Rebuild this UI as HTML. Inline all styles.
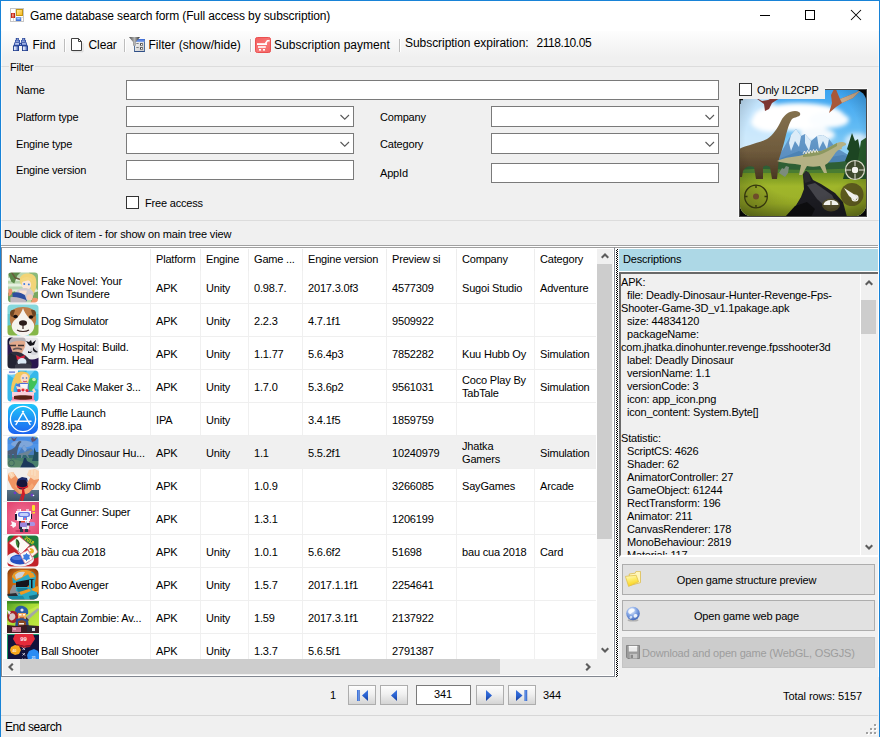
<!DOCTYPE html><html><head><meta charset="utf-8"><title>Game database search form</title><style>
*{box-sizing:border-box;margin:0;padding:0}
html,body{width:881px;height:737px;overflow:hidden;background:#fff}
body{position:relative;font-family:"Liberation Sans", "DejaVu Sans", sans-serif;font-size:11px;color:#000;letter-spacing:-0.18px}
#win{position:absolute;left:0;top:0;width:880px;height:760px;background:#f0f0f0;border:1px solid #1883d7;border-bottom:none}
.a{position:absolute;white-space:pre}
.t{position:absolute;white-space:pre;line-height:13px;height:13px}
.ui{font-size:12px;letter-spacing:-0.1px;line-height:14px;height:14px}
#title{position:absolute;left:0;top:0;width:878px;height:30px;background:#fff}
#tool{position:absolute;left:0;top:30px;width:878px;height:27px;background:linear-gradient(#fdfdfd,#f0f0f0)}
.sep{position:absolute;width:1px;height:13px;background:#bdbdbd;box-shadow:1px 0 0 #fff}
.inp{position:absolute;background:#fff;border:1px solid #7a7a7a;height:20px}
.cmb{position:absolute;background:#fff;border:1px solid #7a7a7a;height:21px}
.cmb svg{position:absolute;right:3px;top:6.500px}
.chk{position:absolute;width:13px;height:13px;background:#fff;border:1px solid #333}
.btn{position:absolute;left:621px;width:253px;height:31px;background:#e1e1e1;border:1px solid #adadad}
.btn .t{left:0;width:100%;text-align:center;top:9px}
.nb{position:absolute;width:28px;height:20px;border:1px solid #adadad;background:linear-gradient(#fdfdfd,#f0f0f0 45%,#d4d4d4)}
.row{position:absolute;left:0;width:593px;height:33px;border-bottom:1px solid #efefef;background:#fff}
.row.sel{background:linear-gradient(90deg,#fff 36px,#f0f0f0 36px)}
.vl{position:absolute;top:0;width:1px;height:100%;background:#f0f0f0}
.ic{position:absolute;left:4px;top:0;width:32px;height:32px;overflow:hidden}
.c{position:absolute;white-space:pre;line-height:13px}
</style></head><body><div id="win">
<div id="title"></div>
<svg class="a" style="left:9px;top:7px" width="14" height="14" viewBox="0 0 14 14">
<defs><linearGradient id="ay" x1="0" y1="0" x2="1" y2="1"><stop offset="0" stop-color="#fff0a0"/><stop offset="1" stop-color="#f8b414"/></linearGradient>
<linearGradient id="ar" x1="0" y1="0" x2="1" y2="0"><stop offset="0" stop-color="#b01c10"/><stop offset="0.500" stop-color="#ec5a48"/><stop offset="1" stop-color="#a81408"/></linearGradient>
<linearGradient id="ab" x1="0" y1="0" x2="0" y2="1"><stop offset="0" stop-color="#7aa8f0"/><stop offset="1" stop-color="#3a6cd4"/></linearGradient></defs>
<rect x="0.500" y="0.500" width="13" height="13" fill="#fff" stroke="#c6c6c6"/>
<path d="M5.500 1v12M1 9.500h12M11.500 9v4M3.500 10v3" stroke="#dcdcdc" stroke-width="1"/>
<rect x="6.500" y="1.500" width="6" height="6" fill="url(#ay)" stroke="#c4950e"/>
<rect x="1" y="5" width="4" height="5" fill="url(#ar)"/><rect x="2.200" y="6.200" width="1.300" height="2.300" fill="#f8a898"/>
<rect x="6" y="9" width="5" height="4" fill="url(#ab)"/><rect x="7.200" y="10" width="2.600" height="1.300" fill="#a8c8f8"/>
</svg>
<div class="t ui" style="left:29px;top:8px;letter-spacing:-0.12px">Game database search form (Full access by subscription)</div>
<svg class="a" style="left:750px;top:0px" width="128" height="30" viewBox="0 0 128 30">
<path d="M9 14.500h10" stroke="#000" stroke-width="1" fill="none"/>
<rect x="54.500" y="9.500" width="9" height="9" stroke="#000" stroke-width="1" fill="none"/>
<path d="M100 9l10 10m0-10l-10 10" stroke="#000" stroke-width="1.050" fill="none"/>
</svg>
<div id="tool"></div>
<svg class="a" style="left:12px;top:37px" width="15" height="13" viewBox="0 0 15 13">
<defs><linearGradient id="bn" x1="0" y1="0" x2="1" y2="0"><stop offset="0" stop-color="#e8eefc"/><stop offset="0.450" stop-color="#c4d0f0"/><stop offset="1" stop-color="#3a58b0"/></linearGradient></defs>
<rect x="2.800" y="0" width="3" height="2" fill="#27459a"/><rect x="3.800" y="0.700" width="1" height="1" fill="#dfe6fa"/>
<rect x="9.200" y="0" width="3" height="2" fill="#27459a"/><rect x="10.200" y="0.700" width="1" height="1" fill="#dfe6fa"/>
<rect x="2" y="2" width="5" height="2.300" fill="#3553ab"/><rect x="2.800" y="2.700" width="3" height="0.900" fill="#c9d4f2"/>
<rect x="8" y="2" width="5" height="2.300" fill="#3553ab"/><rect x="8.800" y="2.700" width="3" height="0.900" fill="#c9d4f2"/>
<path d="M1.500 4.300h5.500l0.500 1.200h0l0.500-1.200h5.500l1 3.700h-14z" fill="#2a4aa2"/>
<path d="M2.300 5h3.700v1.800h-4.200z" fill="#b8c6ee"/><path d="M9 5h3.700l0.500 1.800h-4.200z" fill="#9fb2e6"/>
<rect x="6.300" y="5.300" width="2.400" height="2.200" fill="#1f3c8c"/><rect x="7" y="6" width="1" height="1" fill="#8fa4dc"/>
<rect x="0" y="7.600" width="6" height="5.400" fill="#1f3c8c"/><rect x="0.900" y="8.400" width="4.300" height="3.800" fill="url(#bn)"/>
<rect x="9" y="7.600" width="6" height="5.400" fill="#1f3c8c"/><rect x="9.900" y="8.400" width="4.300" height="3.800" fill="url(#bn)"/>
</svg>
<div class="t ui" style="left:31.5px;top:37px;">Find</div>
<div class="sep" style="left:63px;top:38px"></div>
<svg class="a" style="left:70px;top:37px" width="13" height="15" viewBox="0 0 13 15">
<path d="M1.500 13.800h10.500v-8.500" fill="none" stroke="#d8d8d8" stroke-width="1"/>
<path d="M0.500 0.500H7.500L10.500 3.500V12.500H0.500Z" fill="#fff" stroke="#404040" stroke-width="1"/>
<path d="M7.500 0.500V3.500H10.500" fill="none" stroke="#404040" stroke-width="1"/>
</svg>
<div class="t ui" style="left:87.5px;top:37px;">Clear</div>
<div class="sep" style="left:123px;top:38px"></div>
<svg class="a" style="left:128px;top:36px" width="16" height="15" viewBox="0 0 16 15">
<defs><linearGradient id="fh" x1="0" y1="0" x2="0" y2="1"><stop offset="0" stop-color="#3766d6"/><stop offset="1" stop-color="#86a8ec"/></linearGradient>
<linearGradient id="fb" x1="0" y1="0" x2="1" y2="1"><stop offset="0" stop-color="#fafafa"/><stop offset="1" stop-color="#c8c8c8"/></linearGradient>
<linearGradient id="fu" x1="0" y1="0" x2="1" y2="0"><stop offset="0" stop-color="#4a4a4a"/><stop offset="0.500" stop-color="#b4b4b4"/><stop offset="1" stop-color="#2c2c2c"/></linearGradient></defs>
<rect x="5.500" y="2.500" width="10" height="12" fill="url(#fb)" stroke="#52709c" stroke-width="1"/>
<rect x="6" y="2" width="9.500" height="3" fill="url(#fh)"/>
<path d="M5.500 14.500h10" stroke="#2f4f86" stroke-width="1"/>
<rect x="7.300" y="6.200" width="2.400" height="0.800" fill="#666"/><rect x="7.300" y="10.200" width="2.400" height="0.800" fill="#666"/>
<rect x="11" y="6.200" width="2.800" height="2.400" fill="#444"/><rect x="12" y="7" width="1.200" height="1.100" fill="#fff"/>
<rect x="11" y="10.200" width="2.800" height="2.400" fill="#444"/><rect x="12" y="11" width="1.200" height="1.100" fill="#fff"/>
<path d="M0 0H11L6.800 5V8.800H4V5Z" fill="url(#fu)"/>
</svg>
<div class="t ui" style="left:147.5px;top:37px;letter-spacing:0.02px">Filter (show/hide)</div>
<div class="sep" style="left:249px;top:38px"></div>
<svg class="a" style="left:254px;top:36px" width="16" height="16" viewBox="0 0 16 16">
<defs><linearGradient id="ct" x1="0" y1="0" x2="1" y2="1"><stop offset="0" stop-color="#f25e5e"/><stop offset="0.600" stop-color="#f87878"/><stop offset="1" stop-color="#f06060"/></linearGradient></defs>
<rect x="0.500" y="0.500" width="15" height="15" rx="1.800" fill="url(#ct)" stroke="#ea5050" stroke-width="1"/>
<rect x="2" y="6.200" width="10" height="1.800" fill="#fff"/>
<rect x="3" y="9.200" width="7.800" height="1.600" fill="#fff"/>
<rect x="4" y="12" width="2" height="1.600" fill="#fff"/><rect x="8" y="12" width="2" height="1.600" fill="#fff"/>
<path d="M10.300 6.800L12.400 3.800H14.600" fill="none" stroke="#fff" stroke-width="1.500"/>
</svg>
<div class="t ui" style="left:273px;top:37px;letter-spacing:0.02px">Subscription payment</div>
<div class="sep" style="left:398px;top:38px"></div>
<div class="t ui" style="left:404px;top:35px;letter-spacing:-0.05px">Subscription expiration:</div>
<div class="t ui" style="left:535.5px;top:35px;letter-spacing:-0.45px">2118.10.05</div>
<div class="a" style="left:0;top:30px;width:1px;height:214px;background:#f9f9f9"></div><div class="a" style="left:877px;top:30px;width:1px;height:214px;background:#f9f9f9"></div>
<div class="a" style="left:0px;top:65px;width:878px;height:155px;border:1px solid #dcdcdc;border-left-color:#f9f9f9;border-right-color:#f9f9f9"></div>
<div class="t" style="left:8px;top:60px;background:#f0f0f0;padding:0 2px 0 1px">Filter</div>
<div class="t " style="left:15px;top:83px;">Name</div>
<div class="inp" style="left:125px;top:79px;width:593px"></div>
<div class="t " style="left:15px;top:110px;">Platform type</div>
<div class="cmb" style="left:125px;top:105px;width:228px"><svg width="11" height="7" viewBox="0 0 11 7"><path d="M1.500 1l4.250 4.250l4.250-4.250" fill="none" stroke="#585858" stroke-width="1.100"/></svg></div>
<div class="t " style="left:15px;top:137px;">Engine type</div>
<div class="cmb" style="left:125px;top:132px;width:228px"><svg width="11" height="7" viewBox="0 0 11 7"><path d="M1.500 1l4.250 4.250l4.250-4.250" fill="none" stroke="#585858" stroke-width="1.100"/></svg></div>
<div class="t " style="left:15px;top:163px;">Engine version</div>
<div class="inp" style="left:125px;top:159px;width:228px"></div>
<div class="t " style="left:379px;top:110px;">Company</div>
<div class="cmb" style="left:490px;top:105px;width:228px"><svg width="11" height="7" viewBox="0 0 11 7"><path d="M1.500 1l4.250 4.250l4.250-4.250" fill="none" stroke="#585858" stroke-width="1.100"/></svg></div>
<div class="t " style="left:379px;top:137px;">Category</div>
<div class="cmb" style="left:490px;top:132px;width:228px"><svg width="11" height="7" viewBox="0 0 11 7"><path d="M1.500 1l4.250 4.250l4.250-4.250" fill="none" stroke="#585858" stroke-width="1.100"/></svg></div>
<div class="t " style="left:379px;top:166px;">AppId</div>
<div class="inp" style="left:490px;top:162px;width:228px"></div>
<div class="chk" style="left:125px;top:195px"></div>
<div class="t " style="left:144px;top:196px;">Free access</div>
<svg class="a" style="left:738px;top:88px" width="128" height="128" viewBox="0 0 128 128">
<defs>
<linearGradient id="sky" x1="0" y1="0" x2="0" y2="1"><stop offset="0" stop-color="#3aa2f0"/><stop offset="0.300" stop-color="#62bbf4"/><stop offset="0.650" stop-color="#b4e2f8"/><stop offset="1" stop-color="#d8f0fa"/></linearGradient>
<linearGradient id="grs" x1="0" y1="0" x2="0" y2="1"><stop offset="0" stop-color="#6f9022"/><stop offset="0.300" stop-color="#a0b62a"/><stop offset="0.700" stop-color="#9cb028"/><stop offset="1" stop-color="#7c8e1e"/></linearGradient>
<radialGradient id="vig" cx="0.500" cy="0.400" r="0.750"><stop offset="0.600" stop-color="#000" stop-opacity="0"/><stop offset="1" stop-color="#000" stop-opacity="0.350"/></radialGradient>
<linearGradient id="mtn" x1="0" y1="0" x2="0" y2="1"><stop offset="0" stop-color="#6a9ccc"/><stop offset="1" stop-color="#4f86b8"/></linearGradient>
<linearGradient id="bra" x1="0" y1="0" x2="0" y2="1"><stop offset="0" stop-color="#84714e"/><stop offset="0.600" stop-color="#6e5a3c"/><stop offset="1" stop-color="#483622"/></linearGradient>
<clipPath id="rc"><rect x="0.500" y="0.500" width="127" height="127" rx="13"/></clipPath>
<filter id="b1" x="-10%" y="-10%" width="120%" height="120%"><feGaussianBlur stdDeviation="0.700"/></filter>
<filter id="b2" x="-20%" y="-20%" width="140%" height="140%"><feGaussianBlur stdDeviation="2.200"/></filter>
</defs>
<rect width="128" height="128" fill="#060606"/>
<g clip-path="url(#rc)">
<rect width="128" height="128" fill="url(#sky)"/>
<g filter="url(#b2)">
<ellipse cx="6" cy="30" rx="34" ry="34" fill="#eaf6ff" fill-opacity="0.750"/>
<ellipse cx="60" cy="28" rx="46" ry="14" fill="#fff"/>
<ellipse cx="34" cy="33" rx="22" ry="10" fill="#fff"/>
<ellipse cx="90" cy="31" rx="20" ry="8" fill="#fafdff"/>
<ellipse cx="78" cy="46" rx="18" ry="7" fill="#f4f9fd"/>
<ellipse cx="118" cy="52" rx="12" ry="8" fill="#e6f3fb" fill-opacity="0.800"/>
</g>
<g filter="url(#b1)">
<path d="M34 76 L44 60 L52 46 L57 40 L62 47 L66 45 L72 52 L78 47 L84 46 L90 50 L96 58 L106 64 L116 70 L128 74 V88 H34z" fill="url(#mtn)"/>
<path d="M52 46 L57 40 L62 47 L60 58 L56 52 L52 62 L50 54z M78 47 L84 46 L90 50 L88 60 L84 52 L80 60z M66 45 L72 52 L70 62 L66 54z" fill="#dcecf8"/>
<path d="M40 70 L60 62 L80 70 L104 66 L128 72 V86 H40z" fill="#4a80b0" fill-opacity="0.800"/>
<path d="M0 73 C14 69 30 71 44 73 C60 70 84 75 100 73 L128 69 V90 H0z" fill="#2f5e34"/>
<path d="M0 81 C20 79 40 81 70 81 L128 79 V90 H0z" fill="#4a7c30"/>
<rect x="0" y="84" width="128" height="44" fill="url(#grs)"/>
<path d="M113 44 L116 52 L119 50 L121 60 L124 58 L128 72 V90 H104 L108 74 L106 72 L110 62 L108 60z" fill="#1c4420"/>
<path d="M122 52 L128 48 V90 H116z" fill="#28582a"/>
<path d="M0 88 L0 60 C8 56 20 54 28 50 C34 46 38 40 42 32 C45 26 50 22 56 22 C60 22 62 24 61 26 C60 28 56 28 53 30 C50 34 48 42 46 50 C44 58 42 64 40 70 C39 76 39 82 38 90 L33 90 L31 78 C28 76 26 76 24 78 L24 90 L17 90 L15 78 C10 76 6 78 4 82 L3 88z" fill="url(#bra)"/>
<path d="M38 72 C46 68 56 68 64 66 C70 62 76 62 82 62 C88 60 94 56 98 54 C102 52 108 53 107 56 C104 57 102 58 103 60 C100 60 97 62 95 66 C92 70 90 74 86 76 L88 84 L85 84 L81 77 C76 78 72 78 68 77 L63 86 L60 86 L62 76 C54 74 46 75 38 72z" fill="#b4b184"/>
<path d="M64 66 C70 62 76 62 82 62 C88 60 94 56 98 54 L98 57 C92 60 86 64 80 66 C74 67 68 68 64 68z" fill="#8c9860"/>
<path d="M64 65 l1.500-3 1.500 3 1.500-3.500 1.500 3 1.500-3.500 1.500 3 1.500-3.500 1.500 3 1.500-3 1.500 3" fill="none" stroke="#f0ece0" stroke-width="0.900"/>
<path d="M40 84 l3-5 2 1 2-3 3 1 -1 6 -3 4z" fill="#7c8c7c"/>
<path d="M14 7 L23 12 L29 11 L41 5 L44 7 L33 14 L30 20 L26 22 L25 15z" fill="#7c3430"/>
<path d="M92 6 L96 -2 L101 10 L116 4 L122 1 L114 9 L103 14 L97 18 L90 24 L93 14z" fill="#a85838"/>
<path d="M101 10 L116 4 L122 1 L114 9 L103 14z" fill="#c8a888"/>
</g>
<path d="M48 128 L56 118 L62 108 L65 100 L64 85 L67 82 L70 84 L74 91 L82 95 L96 104 L104 113 L108 128z" fill="#1c1c20" filter="url(#b1)"/>
<path d="M68 96 L76 94 L93 106 L99 118 L89 120 L78 110z" fill="#44444a"/>
<path d="M64 86 L67 82 L70 84 L72 92 L66 94z" fill="#2a2a2e"/>
<path d="M46 128 L56 117 L68 113 L76 120 L72 128z" fill="#0e0e10"/>
<rect width="128" height="128" fill="url(#vig)"/>
<path d="M0 10h4v1.300h-2.300v3.700h-1.700z" fill="#050505"/>
<circle cx="17" cy="107.500" r="11.300" fill="#5a5a10" fill-opacity="0.120" stroke="#34360e" stroke-width="1.300"/>
<circle cx="17" cy="107.500" r="3" fill="#6e4c2a"/>
<path d="M17 96.500v2.500M17 116v2.500M6 107.500h2.500M25.500 107.500h2.500" stroke="#34360e" stroke-width="1.400"/>
<circle cx="116" cy="81" r="9.500" fill="#4c4a30" fill-opacity="0.700" stroke="#d8d8c8" stroke-width="1.200"/>
<circle cx="116" cy="81" r="3.200" fill="#f4f4f0"/>
<path d="M116 72v5M116 85v5M107 81h5M120 81h5" stroke="#e8e8e0" stroke-width="1"/>
<circle cx="113" cy="105.500" r="11.500" fill="#4e461c" fill-opacity="0.800"/>
<path d="M105 99 L113 104 L119 108 L116 112 L110 107z" fill="#f0f0ec"/>
<circle cx="116" cy="109" r="3" fill="none" stroke="#f0f0ec" stroke-width="1.200"/>
<ellipse cx="92" cy="116" rx="9" ry="6.500" fill="#524c24" fill-opacity="0.800"/>
<path d="M84.500 116 A7.500 5 0 0 1 99.500 116z" fill="#f0f0ec"/>
<path d="M92 112v4" stroke="#524c24" stroke-width="1.200"/>
</g>
</svg>
<div class="a" style="left:737px;top:87px;width:130px;height:130px;border:1px solid #fafafa"></div>
<div class="a" style="left:738px;top:88px;width:128px;height:128px;border:1px solid #4a4a4a"></div>
<div class="a" style="left:736px;top:81px;width:88px;height:17px;background:#f0f0f0"></div>
<div class="chk" style="left:738px;top:82px"></div>
<div class="t " style="left:756px;top:83px;">Only IL2CPP</div>
<div class="t " style="left:3px;top:226.5px;">Double click of item - for show on main tree view</div>
<div class="a" style="left:0;top:244px;width:877px;height:4px;background:linear-gradient(#a0a0a0 0 1px,#fff 1px 2px,#a0a0a0 2px 3px,#fff 3px 4px)"></div>
<div class="a" style="left:877px;top:244px;width:1px;height:432px;background:#fff"></div>
<div class="a" style="left:0px;top:246px;width:614px;height:430px;background:#fff;border:1px solid #828790;border-top-color:#a0a0a0"></div>
<div class="a" id="tbl" style="left:2px;top:248px;width:610px;height:426px;background:#fff;overflow:hidden">
<div class="a" style="left:0;top:0;width:594px;height:22px;background:#fff">
<div class="c" style="left:6px;top:4px">Name</div>
<div class="a" style="left:147px;top:0;width:1px;height:22px;background:#ededed"></div>
<div class="c" style="left:153px;top:4px">Platform</div>
<div class="a" style="left:197px;top:0;width:1px;height:22px;background:#ededed"></div>
<div class="c" style="left:203px;top:4px">Engine</div>
<div class="a" style="left:245px;top:0;width:1px;height:22px;background:#ededed"></div>
<div class="c" style="left:251px;top:4px">Game ...</div>
<div class="a" style="left:299px;top:0;width:1px;height:22px;background:#ededed"></div>
<div class="c" style="left:305px;top:4px">Engine version</div>
<div class="a" style="left:383px;top:0;width:1px;height:22px;background:#ededed"></div>
<div class="c" style="left:389px;top:4px">Preview si</div>
<div class="a" style="left:453px;top:0;width:1px;height:22px;background:#ededed"></div>
<div class="c" style="left:459px;top:4px">Company</div>
<div class="a" style="left:531px;top:0;width:1px;height:22px;background:#ededed"></div>
<div class="c" style="left:537px;top:4px">Category</div>
</div>
<div class="row" style="top:22px">
<div class="vl" style="left:147px"></div>
<div class="vl" style="left:197px"></div>
<div class="vl" style="left:245px"></div>
<div class="vl" style="left:299px"></div>
<div class="vl" style="left:383px"></div>
<div class="vl" style="left:453px"></div>
<div class="vl" style="left:531px"></div>
<div class="ic"><svg width="32" height="32" viewBox="-0.5 -1 33 33"><defs><filter id="ib1" x="-10%" y="-10%" width="120%" height="120%"><feGaussianBlur stdDeviation="0.550"/></filter><clipPath id="ic1"><rect x="0.500" y="0.500" width="31" height="31" rx="3.500"/></clipPath></defs><g clip-path="url(#ic1)"><g filter="url(#ib1)"><rect width="32" height="32" fill="#b9d6ae"/><rect x="0" y="6" width="32" height="3" fill="#eef6ea"/><rect x="0" y="12" width="32" height="3" fill="#e6f0e0"/><rect x="0" y="18" width="32" height="2.500" fill="#dcebd4"/><path d="M0 0h14l-4 4-3 8-3-2z" fill="#5c8a4a"/><path d="M4 0l4 6 6 2" stroke="#6a5a3a" stroke-width="1.500" fill="none"/><path d="M22 0h10v20l-4-6z" fill="#8cba7a"/><path d="M0 22l8-2v12h-8z" fill="#6fa05c"/><path d="M26 22l6-2v12h-8z" fill="#79a860"/><path d="M13 6c2-6 14-6 16 0 2 6 0 14-3 18l-2-8-9-2c-2-2-3-5-2-8z" fill="#f2d477"/><ellipse cx="19.500" cy="13" rx="4.800" ry="5.200" fill="#fbe6d6"/><path d="M14 8c3-4 10-4 12 1-4-1-8 0-12 2z" fill="#f4d880"/><circle cx="17.300" cy="12.500" r="1" fill="#3a7ae0"/><circle cx="22" cy="12.800" r="1" fill="#3a7ae0"/><path d="M9 20c3-3 8-4 12-3s6 3 6 6l-2 6h-16z" fill="#d2cbd0"/><path d="M12 19h8l-1 4h-6z" fill="#fae2d2"/><path d="M5 22c3-2 9-1 13 2l2 6-4 2h-10z" fill="#2f4d9e"/><path d="M3 26c5-1 12 1 16 3v3h-16z" fill="#bfb8c0"/><circle cx="23" cy="26" r="3" fill="#f6cdb6"/><path d="M1 18c2-2 4-1 4 2s-2 5-4 5z" fill="#f09070"/><path d="M26 27c3-1 6 0 6 3v2h-8z" fill="#f09a70"/></g></g></svg></div>
<div class="c" style="left:38px;top:4px">Fake Novel: Your<br>Own Tsundere</div>
<div class="c" style="left:153px;top:11px">APK</div>
<div class="c" style="left:203px;top:11px">Unity</div>
<div class="c" style="left:251px;top:11px">0.98.7.</div>
<div class="c" style="left:305px;top:11px">2017.3.0f3</div>
<div class="c" style="left:389px;top:11px">4577309</div>
<div class="c" style="left:459px;top:11px">Sugoi Studio</div>
<div class="c" style="left:537px;top:11px">Adventure</div>
</div>
<div class="row" style="top:55px">
<div class="vl" style="left:147px"></div>
<div class="vl" style="left:197px"></div>
<div class="vl" style="left:245px"></div>
<div class="vl" style="left:299px"></div>
<div class="vl" style="left:383px"></div>
<div class="vl" style="left:453px"></div>
<div class="vl" style="left:531px"></div>
<div class="ic"><svg width="32" height="32" viewBox="0 0 32 32"><defs><filter id="ib2" x="-10%" y="-10%" width="120%" height="120%"><feGaussianBlur stdDeviation="0.550"/></filter><clipPath id="ic2"><rect x="0.500" y="0.500" width="31" height="31" rx="3.500"/></clipPath></defs><g clip-path="url(#ic2)"><g filter="url(#ib2)"><rect width="32" height="32" fill="#62c8cf"/><rect x="0" y="0" width="32" height="10" fill="#86d8dc"/><path d="M0 22c4-2 8-1 10 2v8h-10zM32 21c-4-1-8 0-10 3v8h10z" fill="#86b64a"/><path d="M3 12c0-6 6-9 13-9s13 3 13 9c1 6-2 12-5 16l-8 4-8-4c-3-4-6-10-5-16z" fill="#bd7d48"/><path d="M3 9c0-3 3-4 5-3l-2 7c-2 0-3-2-3-4zM29 9c0-3-3-4-5-3l2 7c2 0 3-2 3-4z" fill="#6e4424"/><path d="M16 4c1 3 3 7 6 10 4 3 6 6 5 10-1 4-5 8-11 8s-10-4-11-8c-1-4 1-7 5-10 3-3 5-7 6-10z" fill="#f6f3ef"/><ellipse cx="16" cy="19" rx="4" ry="2.800" fill="#2c1a1a"/><path d="M16 21v4M10 26c3 2 9 2 12 0" stroke="#3a2622" stroke-width="1.200" fill="none"/><ellipse cx="8.500" cy="12.500" rx="2.300" ry="1.800" fill="#141010"/><ellipse cx="24" cy="13" rx="2.300" ry="1.800" fill="#141010"/></g></g></svg></div>
<div class="c" style="left:38px;top:11px">Dog Simulator</div>
<div class="c" style="left:153px;top:11px">APK</div>
<div class="c" style="left:203px;top:11px">Unity</div>
<div class="c" style="left:251px;top:11px">2.2.3</div>
<div class="c" style="left:305px;top:11px">4.7.1f1</div>
<div class="c" style="left:389px;top:11px">9509922</div>
</div>
<div class="row" style="top:88px">
<div class="vl" style="left:147px"></div>
<div class="vl" style="left:197px"></div>
<div class="vl" style="left:245px"></div>
<div class="vl" style="left:299px"></div>
<div class="vl" style="left:383px"></div>
<div class="vl" style="left:453px"></div>
<div class="vl" style="left:531px"></div>
<div class="ic"><svg width="32" height="32" viewBox="0 0 32 32"><defs><filter id="ib3" x="-10%" y="-10%" width="120%" height="120%"><feGaussianBlur stdDeviation="0.550"/></filter><clipPath id="ic3"><rect x="0.500" y="0.500" width="31" height="31" rx="3.500"/></clipPath></defs><g clip-path="url(#ic3)"><g filter="url(#ib3)"><rect width="32" height="32" fill="#2c1650"/><rect x="0" y="0" width="12" height="8" fill="#181838"/><circle cx="25" cy="9" r="13.500" fill="#e9e9ec"/><circle cx="27" cy="14" r="4" fill="#d6d6dc"/><path d="M19 4l3 1 2-2 1 3 4-3-2 5-4 1-2-2zM26 10c1 2 3 4 5 5-2 1-4 0-5-2zM21 14l2 1 2-1-1 2-3 0z" fill="#15121c"/><path d="M2 6c1-5 6-7 11-6s6 5 5 10l-3 6h-9z" fill="#e2aa8c"/><path d="M2 7c0-5 4-8 9-8s8 2 8 6c-4-2-12-2-17 2z" fill="#b4b0b4"/><path d="M3 8.500h6M11 8.500h6" stroke="#3a3030" stroke-width="1.600"/><path d="M6 12.500c3-1.500 6-1.500 9 0" stroke="#6a5a58" stroke-width="1.600" fill="none"/><path d="M0 20c2-5 6-6 11-5s11 5 14 12l-1 5h-24z" fill="#2e2e3c"/><path d="M3 16l7 4-2 12h-8v-10z" fill="#202030"/><path d="M9 18l4 2 5-2-1 5-4-1-3 1z" fill="#d6243c"/><ellipse cx="15" cy="25" rx="4.500" ry="4" fill="#dbe8f4"/><path d="M8 28c4-2 12-2 16 0v4h-16z" fill="#3a3a4a"/></g></g></svg></div>
<div class="c" style="left:38px;top:4px">My Hospital: Build.<br>Farm. Heal</div>
<div class="c" style="left:153px;top:11px">APK</div>
<div class="c" style="left:203px;top:11px">Unity</div>
<div class="c" style="left:251px;top:11px">1.1.77</div>
<div class="c" style="left:305px;top:11px">5.6.4p3</div>
<div class="c" style="left:389px;top:11px">7852282</div>
<div class="c" style="left:459px;top:11px">Kuu Hubb Oy</div>
<div class="c" style="left:537px;top:11px">Simulation</div>
</div>
<div class="row" style="top:121px">
<div class="vl" style="left:147px"></div>
<div class="vl" style="left:197px"></div>
<div class="vl" style="left:245px"></div>
<div class="vl" style="left:299px"></div>
<div class="vl" style="left:383px"></div>
<div class="vl" style="left:453px"></div>
<div class="vl" style="left:531px"></div>
<div class="ic"><svg width="32" height="32" viewBox="0 0 32 32"><defs><filter id="ib4" x="-10%" y="-10%" width="120%" height="120%"><feGaussianBlur stdDeviation="0.550"/></filter><clipPath id="ic4"><rect x="0.500" y="0.500" width="31" height="31" rx="3.500"/></clipPath></defs><g clip-path="url(#ic4)"><g filter="url(#ib4)"><rect width="32" height="32" fill="#35b7ea"/><path d="M16 14l-16-10v-4h6zM16 14l4-14h8zM16 14l16-4v10z" fill="#6fd0f4"/><path d="M0 0h11v3c-3 2-8 2-11 1z" fill="#f2f4fb"/><rect x="2" y="1.500" width="6" height="1.200" fill="#5a6ad0"/><path d="M8 6c0-5 12-7 15 0l-2 8-6 2-6-3c-2 3-3 8-2 10l-3-2c0-5 1-11 4-15z" fill="#f3c75e"/><ellipse cx="17.500" cy="8.500" rx="4" ry="4.700" fill="#fbdcc6"/><circle cx="16" cy="8" r="0.800" fill="#2a6ad0"/><circle cx="19.500" cy="8" r="0.800" fill="#2a6ad0"/><path d="M16 11c1 1 3 1 4 0" stroke="#d8485a" stroke-width="1" fill="none"/><path d="M9 15c4-3 12-3 15 0l-1 8h-13z" fill="#4f6fd8"/><path d="M13 14h8l-1 9h-6z" fill="#f6f6fa"/><path d="M22 10c2-3 7-3 8 0s-2 5-3 8-4 4-5 2 0-7 0-10z" fill="#3fc257"/><circle cx="27" cy="9.500" r="1.800" fill="#c8f0b0"/><path d="M9 16l12 3 1 2-12-2zM27 18l2 4-2 1-2-3z" fill="#fbdcc6"/><path d="M5 22h22v10h-22z" fill="#f58aa8"/><path d="M5 22h22v3c-2 2-3-1-5 1s-3-1-6 1-4-2-6 0-3-1-5 0z" fill="#fbd0dc"/><path d="M7 26c3-1 15-1 18 0v3c-3 1-15 1-18 0z" fill="#5a2416"/><circle cx="12" cy="20.500" r="1.600" fill="#e02838"/><circle cx="16" cy="20" r="1.600" fill="#e02838"/><circle cx="20" cy="20.500" r="1.600" fill="#e02838"/><rect x="4" y="30" width="24" height="2" fill="#f7b6c8"/></g></g></svg></div>
<div class="c" style="left:38px;top:11px">Real Cake Maker 3...</div>
<div class="c" style="left:153px;top:11px">APK</div>
<div class="c" style="left:203px;top:11px">Unity</div>
<div class="c" style="left:251px;top:11px">1.7.0</div>
<div class="c" style="left:305px;top:11px">5.3.6p2</div>
<div class="c" style="left:389px;top:11px">9561031</div>
<div class="c" style="left:459px;top:4px">Coco Play By<br>TabTale</div>
<div class="c" style="left:537px;top:11px">Simulation</div>
</div>
<div class="row" style="top:154px">
<div class="vl" style="left:147px"></div>
<div class="vl" style="left:197px"></div>
<div class="vl" style="left:245px"></div>
<div class="vl" style="left:299px"></div>
<div class="vl" style="left:383px"></div>
<div class="vl" style="left:453px"></div>
<div class="vl" style="left:531px"></div>
<div class="ic"><svg width="32" height="32" viewBox="0 0 32 32"><defs><linearGradient id="as" x1="0" y1="0" x2="0" y2="1"><stop offset="0" stop-color="#1fc6fb"/><stop offset="1" stop-color="#1c62f0"/></linearGradient></defs><rect x="1" y="1" width="30" height="30" rx="6.500" fill="url(#as)"/><circle cx="16" cy="16" r="12.600" fill="none" stroke="#fff" stroke-width="1.300"/><path d="M16.500 8.500l-7.500 13M15.500 8.500l7.500 13M8 18.300h16" fill="none" stroke="#fff" stroke-width="1.500" stroke-linecap="round"/></svg></div>
<div class="c" style="left:38px;top:4px">Puffle Launch<br>8928.ipa</div>
<div class="c" style="left:153px;top:11px">IPA</div>
<div class="c" style="left:203px;top:11px">Unity</div>
<div class="c" style="left:305px;top:11px">3.4.1f5</div>
<div class="c" style="left:389px;top:11px">1859759</div>
</div>
<div class="row sel" style="top:187px">
<div class="vl" style="left:147px"></div>
<div class="vl" style="left:197px"></div>
<div class="vl" style="left:245px"></div>
<div class="vl" style="left:299px"></div>
<div class="vl" style="left:383px"></div>
<div class="vl" style="left:453px"></div>
<div class="vl" style="left:531px"></div>
<div class="ic"><svg width="32" height="32" viewBox="0 0 32 32"><defs><filter id="ib6" x="-10%" y="-10%" width="120%" height="120%"><feGaussianBlur stdDeviation="0.550"/></filter><clipPath id="ic6"><rect x="0.500" y="0.500" width="31" height="31" rx="3.500"/></clipPath></defs><g clip-path="url(#ic6)"><g filter="url(#ib6)"><rect width="32" height="32" fill="#66aaf0"/><rect x="0" y="0" width="32" height="8" fill="#5a9eea"/><ellipse cx="15" cy="8" rx="11" ry="3.500" fill="#a9c3dc"/><path d="M9 21l5-8 3-4 3 4 4-1 4 4 4 3v4h-23z" fill="#5a86b2"/><path d="M15 12l2-3 3 4-2 3z" fill="#a8c0d6"/><rect x="0" y="19" width="32" height="4" fill="#3d6a46"/><rect x="0" y="22" width="32" height="10" fill="#5d8b3e"/><path d="M0 24c6-1 12 0 16 2v6h-16z" fill="#76983c"/><path d="M0 15c3-1 6-2 8-4 2-3 3-6 5-6 1 0 2 1 1 1.500-1 .5-2 3-3 6-1 3-1 6-1.500 10h-2l-.5-4h-2v4h-2l-.5-4-2.500 1z" fill="#5d584e"/><path d="M11 18c4-1 8-2 12-4 2-1 3 0 2 1-1 0-2 2-4 4l1 3h-1l-2-3h-3l-1 3h-1l0-3c-2 0-3-.5-3-1z" fill="#8e9278"/><path d="M27 11l2 5 3 0v9h-7l2-7z" fill="#25482e"/><path d="M13 32l3-6 1-4 2 0 1 3 6 3 3 4z" fill="#1d2428"/><path d="M4 1l3 2 3-2-2 4-2 0zM24 3l2-3 1 3 4-2-3 4-3 1z" fill="#7a4a44"/><circle cx="4.500" cy="27" r="2.800" fill="none" stroke="#3e5828" stroke-width="0.700"/><rect width="32" height="32" fill="#1f62d8" fill-opacity="0.300"/><circle cx="3" cy="3" r="0.800" fill="#b8d820"/><circle cx="29" cy="1" r="0.800" fill="#b8d820"/></g></g></svg></div>
<div class="c" style="left:38px;top:11px">Deadly Dinosaur Hu...</div>
<div class="c" style="left:153px;top:11px">APK</div>
<div class="c" style="left:203px;top:11px">Unity</div>
<div class="c" style="left:251px;top:11px">1.1</div>
<div class="c" style="left:305px;top:11px">5.5.2f1</div>
<div class="c" style="left:389px;top:11px">10240979</div>
<div class="c" style="left:459px;top:4px">Jhatka<br>Gamers</div>
<div class="c" style="left:537px;top:11px">Simulation</div>
</div>
<div class="row" style="top:220px">
<div class="vl" style="left:147px"></div>
<div class="vl" style="left:197px"></div>
<div class="vl" style="left:245px"></div>
<div class="vl" style="left:299px"></div>
<div class="vl" style="left:383px"></div>
<div class="vl" style="left:453px"></div>
<div class="vl" style="left:531px"></div>
<div class="ic"><svg width="32" height="32" viewBox="0 0 32 32"><defs><filter id="ib7" x="-10%" y="-10%" width="120%" height="120%"><feGaussianBlur stdDeviation="0.550"/></filter><linearGradient id="rk" x1="0" y1="0" x2="0" y2="1"><stop offset="0" stop-color="#5b7286"/><stop offset="1" stop-color="#3c5266"/></linearGradient></defs><g filter="url(#ib7)"><rect width="32" height="32" fill="#f2eeea"/><rect x="0" y="21" width="32" height="11" fill="url(#rk)"/><path d="M1 5l5-2 3 4 5 7h6l5-8 2-4 5 1v8l-6 9-6 5h-8l-7-6-4-8z" fill="#ef9462"/><path d="M9 14l4 5h8l4-5 2 3-5 7h-9l-5-7z" fill="#f6a874"/><path d="M1 5l2-2 3 0 2 4-4 3zM20 6l2-5 6-1 4 2v8l-5 1z" fill="#fbd2ae"/><path d="M22 1v5M25 0v6M28 1v6M3 3l2 4" stroke="#fbe8d0" stroke-width="0.800"/><ellipse cx="15" cy="15" rx="5.500" ry="5.500" fill="#16163a"/><path d="M10 13c3-3 8-3 11 0l-1-4-5-1-4 2z" fill="#1c2a6a"/><path d="M10 16c3 3 8 3 11 0l0 2c-3 2-8 2-11 0z" fill="#d41a26"/><path d="M15 19l2 1 1 5-2 7h-2l2-7-3 7h-1l3-8z" fill="#d41a26"/><circle cx="8" cy="24" r="1.300" fill="#6a3ac8"/><circle cx="25" cy="26" r="1.500" fill="#6a3ac8"/><circle cx="26.500" cy="26.500" r="0.800" fill="#f4f4fa"/></g></svg></div>
<div class="c" style="left:38px;top:11px">Rocky Climb</div>
<div class="c" style="left:153px;top:11px">APK</div>
<div class="c" style="left:251px;top:11px">1.0.9</div>
<div class="c" style="left:389px;top:11px">3266085</div>
<div class="c" style="left:459px;top:11px">SayGames</div>
<div class="c" style="left:537px;top:11px">Arcade</div>
</div>
<div class="row" style="top:253px">
<div class="vl" style="left:147px"></div>
<div class="vl" style="left:197px"></div>
<div class="vl" style="left:245px"></div>
<div class="vl" style="left:299px"></div>
<div class="vl" style="left:383px"></div>
<div class="vl" style="left:453px"></div>
<div class="vl" style="left:531px"></div>
<div class="ic"><svg width="32" height="32" viewBox="0 0 32 32"><defs><radialGradient id="cg" cx="0.500" cy="0.550" r="0.650"><stop offset="0" stop-color="#f47a9a"/><stop offset="1" stop-color="#e34874"/></radialGradient><filter id="ib8"><feGaussianBlur stdDeviation="0.400"/></filter></defs><rect width="32" height="32" fill="url(#cg)"/><g filter="url(#ib8)"><ellipse cx="16" cy="29" rx="8" ry="1.500" fill="#c83a64"/><path d="M9 9h2v-2h3v2h5v-2h3v2h2v3h1v5h-2v2h-13v-2h-2v-6h1z" fill="#fbf8fc"/><path d="M10 7h3v2h-3zM19 7h3v2h-3z" fill="#f0b8d0"/><path d="M8 12h2v6h-2zM24 12h1v5h-1z" fill="#1c1830"/><rect x="11" y="10" width="12" height="5" rx="2" fill="#6a78e4"/><rect x="12.500" y="11" width="9" height="3" rx="1.500" fill="#c4d2fa"/><rect x="16" y="15" width="4" height="3" fill="#5a88e8"/><rect x="17" y="16" width="2" height="2" fill="#f06a8a"/><rect x="12" y="19" width="10" height="8" fill="#eeeaf2"/><rect x="12" y="19" width="3" height="8" fill="#2a2640"/><rect x="14" y="19" width="4" height="2" fill="#e8482c"/><rect x="19" y="19" width="1" height="8" fill="#c8c4d0"/><rect x="13" y="20.500" width="7" height="4.500" rx="1" fill="#9a86dc"/><rect x="22" y="20" width="6" height="4" rx="1.500" fill="#a694e4"/><rect x="20" y="21" width="3" height="2.500" fill="#3a3454"/><path d="M4 19l5 2v3l-3 2-1-2-2 0 2-2z" fill="#fbf8fc"/><rect x="13" y="27" width="3" height="3" fill="#2a3a4c"/><rect x="18" y="27" width="3" height="3" fill="#2a3a4c"/><rect x="25" y="3" width="3" height="6" rx="1" fill="#fbe32c"/><rect x="25.500" y="10" width="2.500" height="1.500" fill="#fbe32c"/></g></svg></div>
<div class="c" style="left:38px;top:4px">Cat Gunner: Super<br>Force</div>
<div class="c" style="left:153px;top:11px">APK</div>
<div class="c" style="left:251px;top:11px">1.3.1</div>
<div class="c" style="left:389px;top:11px">1206199</div>
</div>
<div class="row" style="top:286px">
<div class="vl" style="left:147px"></div>
<div class="vl" style="left:197px"></div>
<div class="vl" style="left:245px"></div>
<div class="vl" style="left:299px"></div>
<div class="vl" style="left:383px"></div>
<div class="vl" style="left:453px"></div>
<div class="vl" style="left:531px"></div>
<div class="ic"><svg width="32" height="32" viewBox="0 0 32 32"><defs><filter id="ib9" x="-10%" y="-10%" width="120%" height="120%"><feGaussianBlur stdDeviation="0.550"/></filter><clipPath id="ic9"><rect x="0.500" y="0.500" width="31" height="31" rx="3.500"/></clipPath></defs><g clip-path="url(#ic9)"><g filter="url(#ib9)"><rect width="32" height="32" fill="#c2242c"/><path d="M14 0h18v22l-6 2z" fill="#1d7c3c"/><path d="M0 0h8l-8 8z" fill="#1d7c3c"/><ellipse cx="13" cy="24" rx="14" ry="7.500" fill="#eef0f6"/><ellipse cx="13" cy="24.500" rx="10" ry="5" fill="#2450c0"/><ellipse cx="10" cy="23" rx="5" ry="2" fill="#4a74dc"/><path d="M2 8l10-7 11 9-9 9z" fill="#fcfaf6" stroke="#d8485a" stroke-width="0.700"/><path d="M9 4c3 0 4 4 3 8s-2 5-1 4 1-2 0-3-3-5-2-9z" fill="#3e8a34"/><path d="M10 5l2 3-1 4" stroke="#1c1c1c" stroke-width="0.800" fill="none"/><path d="M4 14l8 5" stroke="#c2242c" stroke-width="1.600"/><path d="M20 13l7-3 4 7-6 5z" fill="#fcf6ec" stroke="#d8485a" stroke-width="0.700"/><path d="M23 13c2 0 4 1 4 3s-2 3-4 2 0-2 1-2-2-1-1-3z" fill="#e8b42c"/><path d="M13 19l8-4 5 9-8 5z" fill="#fcfaf8" stroke="#d8788a" stroke-width="0.700"/><circle cx="19.500" cy="22" r="3" fill="#3c7ce0"/><path d="M16 20l7 4M16 24l7-4M19.500 18v8" stroke="#3c7ce0" stroke-width="0.900"/><path d="M17 1l12 8" stroke="#1d7c3c" stroke-width="4"/><text x="17" y="4" font-family="Liberation Sans, sans-serif" font-size="5" font-weight="bold" fill="#f4d81c" transform="rotate(33 17 4)">2018</text></g></g></svg></div>
<div class="c" style="left:38px;top:11px">bầu cua 2018</div>
<div class="c" style="left:153px;top:11px">APK</div>
<div class="c" style="left:203px;top:11px">Unity</div>
<div class="c" style="left:251px;top:11px">1.0.1</div>
<div class="c" style="left:305px;top:11px">5.6.6f2</div>
<div class="c" style="left:389px;top:11px">51698</div>
<div class="c" style="left:459px;top:11px">bau cua 2018</div>
<div class="c" style="left:537px;top:11px">Card</div>
</div>
<div class="row" style="top:319px">
<div class="vl" style="left:147px"></div>
<div class="vl" style="left:197px"></div>
<div class="vl" style="left:245px"></div>
<div class="vl" style="left:299px"></div>
<div class="vl" style="left:383px"></div>
<div class="vl" style="left:453px"></div>
<div class="vl" style="left:531px"></div>
<div class="ic"><svg width="32" height="32" viewBox="0 0 32 32"><defs><radialGradient id="ra" cx="0.500" cy="0.500" r="0.700"><stop offset="0" stop-color="#e2861c"/><stop offset="0.700" stop-color="#b4560e"/><stop offset="1" stop-color="#6c2e06"/></radialGradient><filter id="ib10"><feGaussianBlur stdDeviation="0.500"/></filter><clipPath id="ic10"><rect x="0.500" y="0.500" width="31" height="31" rx="5"/></clipPath></defs><g clip-path="url(#ic10)"><rect width="32" height="32" fill="url(#ra)"/><g filter="url(#ib10)"><path d="M5 9c1-5 6-7 12-7s11 2 12 7l-1 6h-22z" fill="#2ba9c4"/><path d="M5 9c1-5 6-7 12-7 3 0 6 .5 8 2l-16 9z" fill="#f09a22"/><path d="M8 7c2-3 6-4 10-3l-3 5-6 2z" fill="#cfd2d6"/><path d="M20 4l6 1 2 4-5 1z" fill="#f09a22"/><path d="M9 14l16-3 3 1v5l-6 0-2 2-11 0z" fill="#16181e"/><path d="M22 12l6 0v8l-6 1z" fill="#2ba9c4"/><rect x="24" y="12" width="1.500" height="8" fill="#16181e"/><path d="M7 19l14 0 4 2 5 3v8h-24z" fill="#2ba9c4"/><path d="M10 20l10 0 3 3-12 3z" fill="#1c7e96"/><path d="M12 24l10-3 2 2-10 4z" fill="#f09a22"/><path d="M3 23l3-6 3 0 0 6 3 1-1 3-8 1z" fill="#8c9096"/><path d="M0 26l9-1 2 3-11 3z" fill="#2a2c32"/><path d="M0 28h16l2 4h-18z" fill="#1a8aa6"/><path d="M24 22l6-4 2 1v6z" fill="#f09a22"/><path d="M22 28l10-2v6h-9z" fill="#176e84"/></g></g></svg></div>
<div class="c" style="left:38px;top:11px">Robo Avenger</div>
<div class="c" style="left:153px;top:11px">APK</div>
<div class="c" style="left:203px;top:11px">Unity</div>
<div class="c" style="left:251px;top:11px">1.5.7</div>
<div class="c" style="left:305px;top:11px">2017.1.1f1</div>
<div class="c" style="left:389px;top:11px">2254641</div>
</div>
<div class="row" style="top:352px">
<div class="vl" style="left:147px"></div>
<div class="vl" style="left:197px"></div>
<div class="vl" style="left:245px"></div>
<div class="vl" style="left:299px"></div>
<div class="vl" style="left:383px"></div>
<div class="vl" style="left:453px"></div>
<div class="vl" style="left:531px"></div>
<div class="ic"><svg width="32" height="32" viewBox="0 0 32 32"><defs><linearGradient id="cz" x1="0" y1="0" x2="1" y2="1"><stop offset="0" stop-color="#4c9c24"/><stop offset="0.450" stop-color="#a8dc34"/><stop offset="1" stop-color="#c8ec44"/></linearGradient><filter id="ib11"><feGaussianBlur stdDeviation="0.550"/></filter></defs><rect width="32" height="32" fill="url(#cz)"/><rect x="0" y="0" width="32" height="2.500" fill="#3c8c20"/><g filter="url(#ib11)"><path d="M0 20l32-16v5l-32 16z" fill="#d4f25c" fill-opacity="0.500"/><path d="M19 16l12-9 1 2-11 10z" fill="#a4a8a4"/><path d="M18 15l4 4-2 2-4-4z" fill="#4a3428"/><path d="M8 10c0-5 5-6 8-5s6 3 5 8l-3 1-9-1z" fill="#2c5ca4"/><circle cx="15" cy="9" r="1.600" fill="#e8e8ec"/><path d="M11 12h8v6l-3 2-5-2z" fill="#f0a860"/><rect x="12" y="13" width="2.500" height="1.500" fill="#fbfbf4"/><rect x="16" y="13" width="2" height="1.500" fill="#fbfbf4"/><path d="M13 17h4" stroke="#7a2c1c" stroke-width="1"/><path d="M1 12c2-3 7-3 9 0s1 7-1 9-7 1-8-2-1-5 0-7z" fill="#a4242c"/><path d="M3 13c2-1 4-1 5 1s0 4-2 5-3 0-4-2z" fill="#d8c8c8"/><path d="M0 9l4 2-2 3z" fill="#e8e8ec"/><path d="M9 18c3-1 9-1 12 1l1 8h-14z" fill="#2c4c8c"/><path d="M11 20c3-1 6-1 8 1l0 6h-8z" fill="#8a4820"/><rect x="12" y="22" width="5" height="1.500" fill="#f4f0e8"/><path d="M0 24l10 1 8-1 14 1v7h-32z" fill="#3c1c24"/><rect x="5" y="26" width="9" height="5" fill="#c8708c"/><rect x="6" y="27" width="3" height="2" fill="#eaa8bc"/><rect x="20" y="25" width="8" height="6" fill="#2c2c34"/><rect x="25" y="27" width="3" height="3" fill="#d8d8dc"/></g></svg></div>
<div class="c" style="left:38px;top:11px">Captain Zombie: Av...</div>
<div class="c" style="left:153px;top:11px">APK</div>
<div class="c" style="left:203px;top:11px">Unity</div>
<div class="c" style="left:251px;top:11px">1.59</div>
<div class="c" style="left:305px;top:11px">2017.3.1f1</div>
<div class="c" style="left:389px;top:11px">2137922</div>
</div>
<div class="row" style="top:385px">
<div class="vl" style="left:147px"></div>
<div class="vl" style="left:197px"></div>
<div class="vl" style="left:245px"></div>
<div class="vl" style="left:299px"></div>
<div class="vl" style="left:383px"></div>
<div class="vl" style="left:453px"></div>
<div class="vl" style="left:531px"></div>
<div class="ic"><svg width="32" height="32" viewBox="0 0 32 32"><rect width="32" height="32" fill="#1a9a6a"/><rect x="1" y="1" width="31" height="31" fill="#12133c"/><path d="M8 0h18l2 5-4 6-7 1-8-2-3-5z" fill="#e42a3a"/><path d="M9 10l8 2 7-1-1 2-6 1-7-2z" fill="#a81826"/><path d="M4 13l4-2 4 1 2 4-2 4-4 1-4-2-1-3z" fill="#f7a81c"/><path d="M22 17l5-2 4 2 1 3v6l-3 3-5 0-3-3-1-5z" fill="#2a8cf4"/><path d="M15.500 13.500l2.500 2.500m0-2.500l-2.500 2.500M15.500 19l2.500 2.500m0-2.500l-2.500 2.500M15.500 24.500l2.500 2.500m0-2.500l-2.500 2.500" stroke="#eceaf6" stroke-width="0.800"/><text x="13.300" y="7" font-family="Liberation Sans, sans-serif" font-size="6" font-weight="bold" fill="#fff" fill-opacity="0.920">99</text><text x="5.600" y="17.800" font-family="Liberation Sans, sans-serif" font-size="3.600" font-weight="bold" fill="#fff" fill-opacity="0.800">40</text><text x="24.500" y="25" font-family="Liberation Sans, sans-serif" font-size="4" font-weight="bold" fill="#fff" fill-opacity="0.800">21</text></svg></div>
<div class="c" style="left:38px;top:11px">Ball Shooter</div>
<div class="c" style="left:153px;top:11px">APK</div>
<div class="c" style="left:203px;top:11px">Unity</div>
<div class="c" style="left:251px;top:11px">1.3.7</div>
<div class="c" style="left:305px;top:11px">5.6.5f1</div>
<div class="c" style="left:389px;top:11px">2791387</div>
</div>
<div class="a" style="left:594px;top:0;width:16px;height:410px;background:#f0f0f0">
<svg class="a" style="left:4px;top:4px" width="8" height="6" viewBox="0 0 8 6"><path d="M0.700 4.800L4 1.500L7.300 4.800" fill="none" stroke="#5c5c5c" stroke-width="2.100"/></svg>
<div class="a" style="left:0px;top:15px;width:15px;height:275px;background:#cdcdcd"></div>
<svg class="a" style="left:4px;top:398px" width="8" height="6" viewBox="0 0 8 6"><path d="M0.700 1.200L4 4.500L7.300 1.200" fill="none" stroke="#5c5c5c" stroke-width="2.100"/></svg>
</div>
<div class="a" style="left:0;top:410px;width:610px;height:16px;background:#f0f0f0">
<svg class="a" style="left:5px;top:4px" width="6" height="8" viewBox="0 0 6 8"><path d="M4.800 0.700L1.500 4L4.800 7.300" fill="none" stroke="#5c5c5c" stroke-width="2.100"/></svg>
<div class="a" style="left:17px;top:0px;width:480px;height:15px;background:#cdcdcd"></div>
<svg class="a" style="left:582px;top:4px" width="6" height="8" viewBox="0 0 6 8"><path d="M1.200 0.700L4.500 4L1.200 7.300" fill="none" stroke="#5c5c5c" stroke-width="2.100"/></svg>
</div>
</div>
<div class="a" style="left:614px;top:248px;width:4px;height:428px;background:#fff"></div>
<div class="a" style="left:615px;top:248px;width:2px;height:428px;background-image:conic-gradient(#000 25%,#fff 0 50%,#000 0 75%,#fff 0);background-size:2px 2px"></div>
<div class="a" style="left:618px;top:248px;width:259px;height:22px;background:#add8e6"></div>
<div class="a" style="left:618px;top:270px;width:259px;height:1px;background:#fff"></div>
<div class="t " style="left:622px;top:252px;">Descriptions</div>
<div class="a" style="left:618px;top:271px;width:259px;height:285px;background:#f0f0f0;border-style:solid;border-width:2px 0 2px 2px;border-color:#696969 #fff #fff #696969;overflow:hidden">
<div class="a" style="left:-2px;top:-2px;width:259px;height:1px;background:#8a8a8a"></div>
<div class="a" style="left:-2px;top:-2px;width:1px;height:285px;background:#a0a0a0"></div>
<div class="a" style="left:0px;top:2px;line-height:13px;white-space:pre">APK:
<span style="padding-left:6px">file: Deadly-Dinosaur-Hunter-Revenge-Fps-</span>
Shooter-Game-3D_v1.1pakage.apk
<span style="padding-left:6px">size: 44834120</span>
<span style="padding-left:6px">packageName:</span>
com.jhatka.dinohunter.revenge.fpsshooter3d
<span style="padding-left:6px">label: Deadly Dinosaur</span>
<span style="padding-left:6px">versionName: 1.1</span>
<span style="padding-left:6px">versionCode: 3</span>
<span style="padding-left:6px">icon: app_icon.png</span>
<span style="padding-left:6px">icon_content: System.Byte[]</span>

Statistic:
<span style="padding-left:6px">ScriptCS: 4626</span>
<span style="padding-left:6px">Shader: 62</span>
<span style="padding-left:6px">AnimatorController: 27</span>
<span style="padding-left:6px">GameObject: 61244</span>
<span style="padding-left:6px">RectTransform: 196</span>
<span style="padding-left:6px">Animator: 211</span>
<span style="padding-left:6px">CanvasRenderer: 178</span>
<span style="padding-left:6px">MonoBehaviour: 2819</span>
<span style="padding-left:6px">Material: 117</span></div>
<div class="a" style="left:239px;top:0;width:18px;height:281px;background:#f0f0f0;border-left:1px solid #fff">
<svg class="a" style="left:3.500px;top:6px" width="8" height="6" viewBox="0 0 8 6"><path d="M0.700 4.800L4 1.500L7.300 4.800" fill="none" stroke="#5c5c5c" stroke-width="2.100"/></svg>
<div class="a" style="left:0px;top:26px;width:15px;height:34px;background:#cdcdcd"></div>
<svg class="a" style="left:3.500px;top:270px" width="8" height="6" viewBox="0 0 8 6"><path d="M0.700 1.200L4 4.500L7.300 1.200" fill="none" stroke="#5c5c5c" stroke-width="2.100"/></svg>
</div>
</div>
<div class="btn" style="top:563px"><div class="t" style="left:-2px">Open game structure preview</div><svg class="a" style="left:2px;top:6px" width="16" height="16" viewBox="0 0 16 16"><defs><linearGradient id="fg" x1="0" y1="0" x2="0.300" y2="1"><stop offset="0" stop-color="#fffbd0"/><stop offset="0.450" stop-color="#fdec70"/><stop offset="1" stop-color="#fbd31c"/></linearGradient></defs><path d="M4.200 3L10.200 2.200L11 0.400L15.500 0.400L15.500 11.600L5 14.500Z" fill="#fff6bc" stroke="#dcbc50" stroke-width="0.800"/><path d="M0.400 5.400L4.600 4.900L11.200 4.300L13.600 10.800L3.600 15.400Z" fill="url(#fg)" stroke="#e2c24c" stroke-width="0.800"/></svg></div>
<div class="btn" style="top:599px"><div class="t" style="left:-2px">Open game web page</div><svg class="a" style="left:2px;top:5px" width="16" height="16" viewBox="0 0 16 16"><defs><radialGradient id="gl" cx="0.400" cy="0.300" r="0.800"><stop offset="0" stop-color="#f4f8ff"/><stop offset="0.450" stop-color="#86a8e6"/><stop offset="1" stop-color="#3056ae"/></radialGradient></defs><ellipse cx="8" cy="14.300" rx="5.500" ry="1.200" fill="#b0b0b0"/><circle cx="8" cy="7.500" r="6.800" fill="url(#gl)"/><path d="M3.500 4.500c1.500-2 4-2.500 5.500-1.500s0.500 2.500-1 3-2 2.500-3 2-2.500-1.500-1.500-3.500zM9 8.500c1-1.200 3.500-0.500 3.500 0.800s-1.500 2.700-2.700 2.500-1.600-2.300-0.800-3.300z" fill="#fbfdff" fill-opacity="0.900"/><path d="M5 10.500c1-0.800 2.500-0.300 2.300 0.800s-1.500 1.700-2.300 1.200-0.700-1.400 0-2z" fill="#fbfdff" fill-opacity="0.700"/></svg></div>
<div class="btn" style="top:636px;height:31px;background:#cccccc;border-color:#c4c4c4"><div class="t" style="top:9px;color:#9d9d9d;left:19px;width:auto;text-align:left">Download and open game (WebGL, OSGJS)</div><svg class="a" style="left:3px;top:7px" width="14" height="14" viewBox="0 0 15 15"><path d="M0.500 0.500h14v14h-12.500l-1.500-1.500z" fill="#9c9c9c" stroke="#808080"/><rect x="3" y="1" width="9" height="6" fill="#ececec"/><rect x="3" y="1" width="9" height="1.500" fill="#fafafa"/><rect x="4" y="9.500" width="8" height="5" fill="#c4c4c4"/><rect x="5" y="10.500" width="2.500" height="3.500" fill="#888"/></svg></div>
<div class="t " style="left:329px;top:688px;">1</div>
<svg width="0" height="0" style="position:absolute"><defs><linearGradient id="bl" x1="0" y1="0" x2="1" y2="0"><stop offset="0" stop-color="#2a5cc8"/><stop offset="0.500" stop-color="#6a9cf0"/><stop offset="1" stop-color="#1f4cb4"/></linearGradient><linearGradient id="bt" x1="0" y1="0" x2="0" y2="1"><stop offset="0" stop-color="#3a74e0"/><stop offset="0.500" stop-color="#2a62d0"/><stop offset="1" stop-color="#143c9c"/></linearGradient></defs></svg>
<div class="nb" style="left:347px;top:684px"><svg class="a" style="left:-1px;top:-1px" width="28" height="20" viewBox="0 0 28 20"><rect x="9" y="5" width="2.700" height="11" fill="url(#bl)"/><path d="M20 5L14 10.500L20 16z" fill="url(#bt)"/></svg></div>
<div class="nb" style="left:379px;top:684px"><svg class="a" style="left:-1px;top:-1px" width="28" height="20" viewBox="0 0 28 20"><path d="M17 5L11 10.500L17 16z" fill="url(#bt)"/></svg></div>
<div class="inp" style="left:415px;top:684px;width:55px;height:20px;border-color:#7a7a7a"></div>
<div class="t " style="left:433px;top:687px;">341</div>
<div class="nb" style="left:475px;top:684px"><svg class="a" style="left:-1px;top:-1px" width="28" height="20" viewBox="0 0 28 20"><path d="M10 5L16 10.500L10 16z" fill="url(#bt)"/></svg></div>
<div class="nb" style="left:507px;top:684px"><svg class="a" style="left:-1px;top:-1px" width="28" height="20" viewBox="0 0 28 20"><path d="M8 5L14.5 10.500L8 16z" fill="url(#bt)"/><rect x="16.5" y="5" width="2.700" height="11" fill="url(#bl)"/></svg></div>
<div class="t " style="left:542px;top:688px;">344</div>
<div class="t " style="left:782px;top:689px;letter-spacing:-0.06px">Total rows: 5157</div>
<div class="a" style="left:0;top:714px;width:877px;height:1px;background:#d7d7d7"></div>
<div class="t ui" style="left:4px;top:719px;letter-spacing:-0.42px">End search</div>
<div class="a" style="left:874px;top:724px;width:2px;height:2px;background:#fff"></div><div class="a" style="left:873px;top:723px;width:2px;height:2px;background:#a0a0a0"></div><div class="a" style="left:870px;top:728px;width:2px;height:2px;background:#fff"></div><div class="a" style="left:869px;top:727px;width:2px;height:2px;background:#a0a0a0"></div><div class="a" style="left:874px;top:728px;width:2px;height:2px;background:#fff"></div><div class="a" style="left:873px;top:727px;width:2px;height:2px;background:#a0a0a0"></div><div class="a" style="left:866px;top:732px;width:2px;height:2px;background:#fff"></div><div class="a" style="left:865px;top:731px;width:2px;height:2px;background:#a0a0a0"></div><div class="a" style="left:870px;top:732px;width:2px;height:2px;background:#fff"></div><div class="a" style="left:869px;top:731px;width:2px;height:2px;background:#a0a0a0"></div><div class="a" style="left:874px;top:732px;width:2px;height:2px;background:#fff"></div><div class="a" style="left:873px;top:731px;width:2px;height:2px;background:#a0a0a0"></div>
</div></body></html>
